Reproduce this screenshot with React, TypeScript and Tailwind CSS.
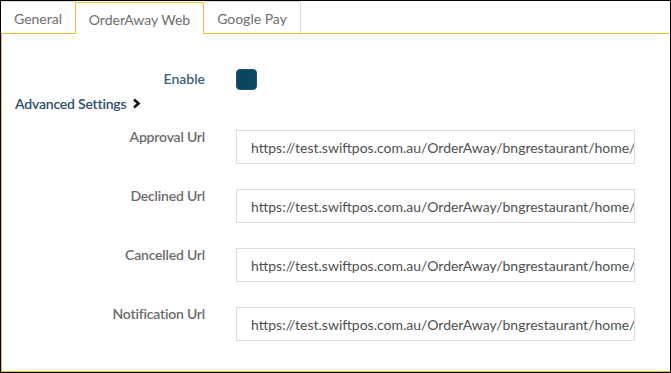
import React from "react";

const URL = "https://test.swiftpos.com.au/OrderAway/bngrestaurant/home/";

function Row({ label }: { label: string }) {
  return (
    <div className="flex items-start h-[33px]">
      <div className="w-[203px] text-right text-[14px] font-semibold text-[#6b6b6b] -mt-[1px] leading-[16px] tracking-[-0.2px]">
        {label}
      </div>
      <div className="ml-[31px] w-[399px] h-[34px] border border-[#dcdcdc] bg-white overflow-hidden flex items-center pl-[14px]">
        <span className="whitespace-nowrap text-[14px] text-[#505050]">{URL}</span>
      </div>
    </div>
  );
}

export default function App() {
  return (
    <div
      className="w-[671px] h-[373px] border border-black bg-white flex flex-col"
      style={{ fontFamily: "Lato, 'Open Sans', sans-serif" }}
    >
      <div className="flex h-[32px] items-stretch">
        <div className="w-[75px] border-t border-r border-[#dcdcdc] flex items-center justify-center text-[14px] text-[#6e6e6e] pt-[1px]">
          General
        </div>
        <div className="w-[129px] border-t border-l border-r border-[#f0c030] bg-white flex items-center justify-center text-[14px] text-[#6e6e6e] pt-[1px] relative top-[1px] -ml-[1px]">
          OrderAway Web
        </div>
        <div className="w-[97px] border-t border-r border-[#dcdcdc] flex items-center justify-center text-[14px] text-[#6e6e6e] pt-[1px]">
          Google Pay
        </div>
        <div className="flex-1" />
      </div>
      <div className="flex-1 border-t border-l border-b border-[#f0c030] pt-[34px]">
        <div className="flex items-center h-[22px]">
          <div className="w-[203px] text-right text-[14px] font-semibold text-[#3f5f78] -mt-[1px]">
            Enable
          </div>
          <div className="ml-[31px] w-[21px] h-[21px] rounded-[4px] bg-[#0b4661] border border-[#1d5670]" />
        </div>
        <div className="flex items-center h-[16px] mt-[5px] pl-[13px] text-[14px] font-semibold text-[#2e4d69] tracking-[-0.2px]">
          Advanced Settings
          <svg width="9" height="11" viewBox="0 0 9 11" className="ml-[6px]">
            <path d="M2 1.5 L6.5 5.5 L2 9.5" fill="none" stroke="#111" strokeWidth="2.6" />
          </svg>
        </div>
        <div className="flex flex-col gap-[26px] mt-[19px]">
          <Row label="Approval Url" />
          <Row label="Declined Url" />
          <Row label="Cancelled Url" />
          <Row label="Notification Url" />
        </div>
      </div>
    </div>
  );
}
